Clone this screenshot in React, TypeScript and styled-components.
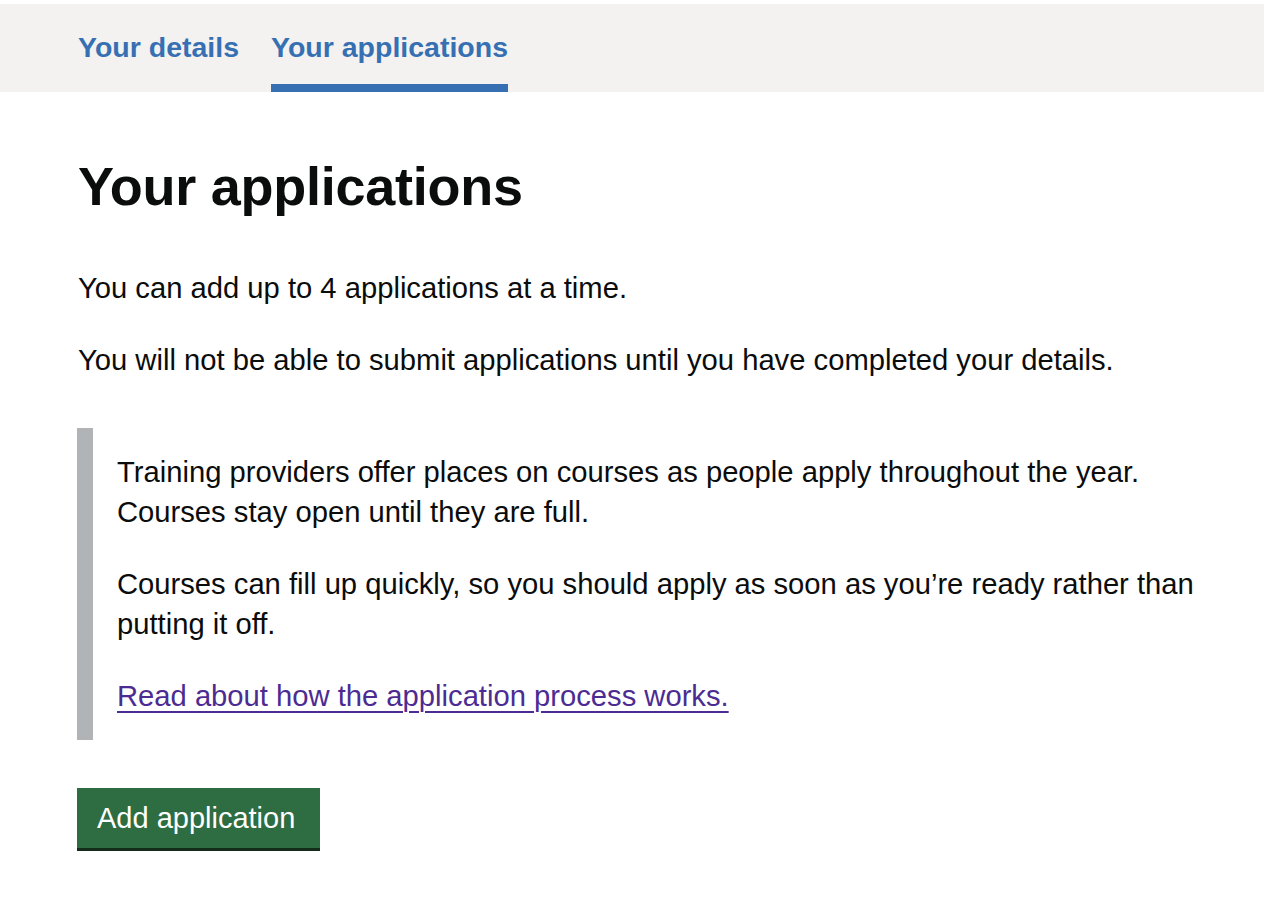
import React from "react";
import styled, { createGlobalStyle } from "styled-components";

const GlobalStyle = createGlobalStyle`
  html, body { margin: 0; padding: 0; background: #ffffff; }
  body {
    font-family: "Liberation Sans", Arial, sans-serif;
    color: #0b0c0c;
    -webkit-font-smoothing: antialiased;
  }
  * { box-sizing: border-box; }
`;

const Page = styled.div`
  padding-top: 4px;
`;

const NavBar = styled.nav`
  background: #f3f2f1;
  height: 88px;
`;

const NavList = styled.ul`
  list-style: none;
  margin: 0;
  padding: 0 0 0 78px;
  display: flex;
  gap: 32px;
  height: 100%;
`;

const NavItem = styled.li<{ $active?: boolean }>`
  display: flex;
  align-items: center;
  height: 100%;
  border-bottom: 8px solid ${(p) => (p.$active ? "#3670b3" : "transparent")};
  padding-top: 6px;
`;

const NavLink = styled.a`
  font-weight: 700;
  font-size: 28.5px;
  line-height: 40px;
  color: #3670b3;
  text-decoration: none;
`;

const Main = styled.main`
  padding: 62px 38px 0 78px;
  max-width: 1264px;
`;

const Heading = styled.h1`
  margin: 0 0 50px;
  font-size: 54px;
  line-height: 64px;
  font-weight: 700;
  letter-spacing: -0.25px;
`;

const Body = styled.p`
  margin: 0 0 32px;
  font-size: 29.2px;
  line-height: 40px;
`;

const Inset = styled.div`
  margin: 48px 0 48px -1px;
  border-left: 16px solid #b1b4b6;
  padding: 24px 0 24px 24px;

  & > p:last-child {
    margin-bottom: 0;
  }
`;

const Link = styled.a`
  color: #4c2c92;
  text-decoration: underline;
  text-decoration-thickness: 2px;
  text-underline-offset: 5px;
`;

const Button = styled.button`
  margin-left: -1px;
  display: inline-block;
  background: #2e6d42;
  color: #ffffff;
  border: 0;
  border-bottom: 3px solid #132d1a;
  border-radius: 0;
  font-family: "Liberation Sans", Arial, sans-serif;
  font-size: 29px;
  line-height: 40px;
  padding: 10px 25px 10px 20px;
  cursor: pointer;
`;

export default function App() {
  return (
    <Page>
      <GlobalStyle />
      <NavBar>
        <NavList>
          <NavItem>
            <NavLink href="#">Your details</NavLink>
          </NavItem>
          <NavItem $active>
            <NavLink href="#">Your applications</NavLink>
          </NavItem>
        </NavList>
      </NavBar>
      <Main>
        <Heading>Your applications</Heading>
        <Body>You can add up to 4 applications at a time.</Body>
        <Body>
          You will not be able to submit applications until you have completed
          your details.
        </Body>
        <Inset>
          <Body>
            Training providers offer places on courses as people apply
            throughout the year. Courses stay open until they are full.
          </Body>
          <Body>
            Courses can fill up quickly, so you should apply as soon as you’re
            ready rather than putting it off.
          </Body>
          <Body>
            <Link href="#">Read about how the application process works.</Link>
          </Body>
        </Inset>
        <Button>Add application</Button>
      </Main>
    </Page>
  );
}
